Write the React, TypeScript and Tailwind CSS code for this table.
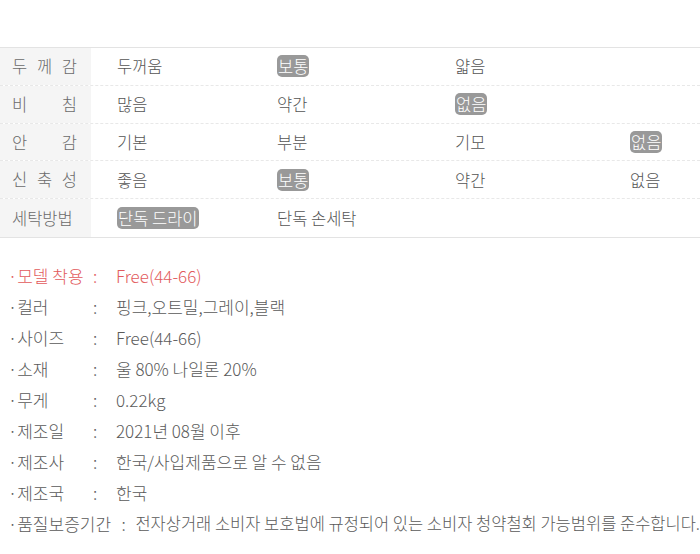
import React from "react";

const font = { fontFamily: '"Noto Sans CJK KR", "Noto Sans", sans-serif' };

type Cell = { t: string; on?: boolean };
const rows: { label: string; cells: Cell[] }[] = [
  { label: "두 께 감", cells: [{ t: "두꺼움" }, { t: "보통", on: true }, { t: "얇음" }, { t: "" }] },
  { label: "비 침", cells: [{ t: "많음" }, { t: "약간" }, { t: "없음", on: true }, { t: "" }] },
  { label: "안 감", cells: [{ t: "기본" }, { t: "부분" }, { t: "기모" }, { t: "없음", on: true }] },
  { label: "신 축 성", cells: [{ t: "좋음" }, { t: "보통", on: true }, { t: "약간" }, { t: "없음" }] },
  { label: "세탁방법", cells: [{ t: "단독 드라이", on: true }, { t: "단독 손세탁" }, { t: "" }, { t: "" }] },
];

const widths = ["w-[160px]", "w-[178px]", "w-[175px]", "flex-1"];

const info: { k: string; v: string; red?: boolean; wide?: boolean }[] = [
  { k: "·모델 착용", v: "Free(44-66)", red: true },
  { k: "·컬러", v: "핑크,오트밀,그레이,블랙" },
  { k: "·사이즈", v: "Free(44-66)" },
  { k: "·소재", v: "울 80% 나일론 20%" },
  { k: "·무게", v: "0.22kg" },
  { k: "·제조일", v: "2021년 08월 이후" },
  { k: "·제조사", v: "한국/사입제품으로 알 수 없음" },
  { k: "·제조국", v: "한국" },
  { k: "·품질보증기간", v: "전자상거래 소비자 보호법에 규정되어 있는 소비자 청약철회 가능범위를 준수합니다.", wide: true },
];

export default function App() {
  return (
    <div className="w-[700px] h-[554px] bg-white overflow-hidden font-light" style={font}>
      <div className="h-[47px]" />
      <div className="border-t border-b border-[#e3e3e3]">
        {rows.map((r, i) => (
          <div
            key={i}
            className={`flex h-[37.8px] ${i < rows.length - 1 ? "border-b border-dashed border-[#e8e8e8]" : ""}`}
          >
            <div className="w-[91px] bg-[#f5f5f5] flex items-center justify-between pl-[12px] pr-[14px] text-[16.5px] text-[#6a6a6a]">
              {r.label.split(" ").map((c, j) => (
                <span key={j}>{c}</span>
              ))}
            </div>
            {r.cells.map((c, j) => (
              <div key={j} className={`${widths[j]} flex items-center pl-[26px] text-[16.5px] text-[#555]`}>
                {c.t &&
                  (c.on ? (
                    <span className="bg-[#999] text-white rounded-[5px] px-[1px] leading-[22px]">{c.t}</span>
                  ) : (
                    <span className="leading-[22px]">{c.t}</span>
                  ))}
              </div>
            ))}
          </div>
        ))}
      </div>
      <div className="pt-[22px] pl-[8px]">
        {info.map((it, i) => (
          <div
            key={i}
            className={`flex h-[31px] items-center text-[17px] ${it.red ? "text-[#e25a5c]" : "text-[#5a5a5a]"}`}
          >
            <span className={it.wide ? "w-[114px] whitespace-nowrap" : "w-[85px] whitespace-nowrap"}>{it.k}</span>
            <span className={it.wide ? "w-[14px]" : "w-[23px]"}>:</span>
            <span className={`whitespace-nowrap ${it.wide ? "text-[16.5px]" : ""}`}>{it.v}</span>
          </div>
        ))}
      </div>
    </div>
  );
}
